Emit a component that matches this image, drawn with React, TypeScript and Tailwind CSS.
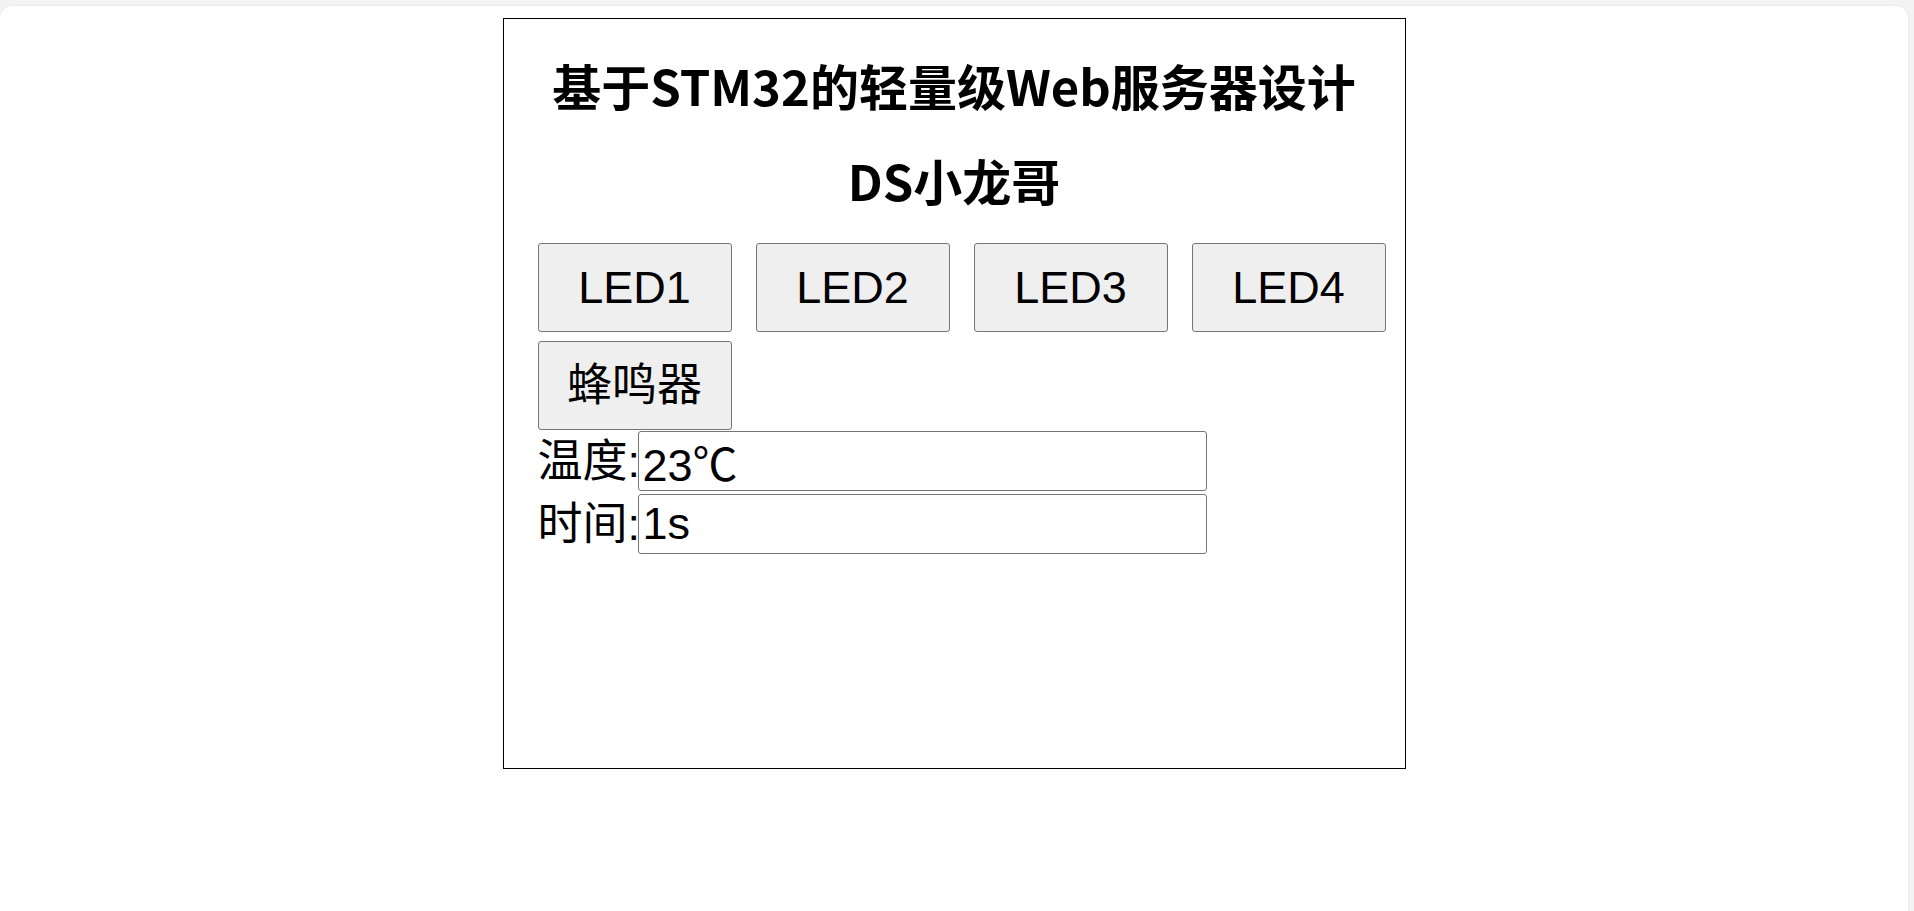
import { useState } from 'react';

const leds = ['LED1', 'LED2', 'LED3', 'LED4', '蜂鸣器'];

const fontSans = 'font-["Liberation_Sans","Noto_Sans_CJK_SC",sans-serif]';

export default function App() {
  const [temp] = useState('23℃');
  const [time] = useState('1s');

  return (
    <div className="h-[911px] overflow-hidden bg-[#f3f3f3] pt-[6px] pr-[6px]">
      <div className="h-[920px] rounded-[12px] bg-white pt-[12px] shadow-[0_0_3px_rgba(0,0,0,0.08)]">
        {/* 主面板 */}
        <div className={`mx-auto flex h-[751px] w-[903px] flex-col border border-black text-black ${fontSans}`}>
          <h1 className='mt-[36px] text-center font-["Noto_Sans_CJK_SC",sans-serif] text-[49px] font-bold leading-[60px]'>
            基于STM32的轻量级Web服务器设计
          </h1>
          <h2 className='mt-[35px] text-center font-["Noto_Sans_CJK_SC",sans-serif] text-[49px] font-bold leading-[60px]'>
            DS小龙哥
          </h2>

          <div className="mt-[33px] flex flex-wrap gap-x-[24px] gap-y-[9px] pl-[34px]">
            {leds.map((name) => (
              <button
                key={name}
                type="button"
                className="h-[89px] w-[194px] cursor-pointer rounded-[3px] border border-[#767676] bg-[#efefef] text-[45px] leading-none text-black"
              >
                {name}
              </button>
            ))}
          </div>

          <div className="mt-[1px] flex flex-col gap-[3px] pl-[34px]">
            <div className="flex items-center">
              <span className="w-[100px] shrink-0 whitespace-nowrap text-[45px] leading-none">温度:</span>
              <input
                readOnly
                value={temp}
                className="h-[60px] w-[569px] shrink-0 rounded-[3px] border border-[#767676] bg-white px-[4px] text-[45px] leading-none text-black outline-none"
              />
            </div>
            <div className="flex items-center">
              <span className="w-[100px] shrink-0 whitespace-nowrap text-[45px] leading-none">时间:</span>
              <input
                readOnly
                value={time}
                className="h-[60px] w-[569px] shrink-0 rounded-[3px] border border-[#767676] bg-white px-[4px] text-[45px] leading-none text-black outline-none"
              />
            </div>
          </div>
        </div>
      </div>
    </div>
  );
}
